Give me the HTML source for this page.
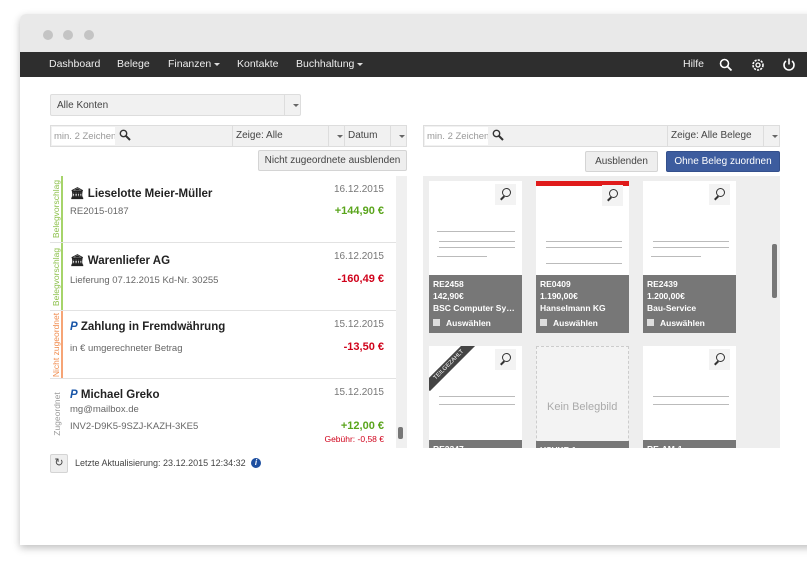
<!DOCTYPE html>
<html><head><meta charset="utf-8"><style>
*{box-sizing:border-box;margin:0;padding:0}
body{width:807px;height:568px;background:#fff;font-family:"Liberation Sans",sans-serif;position:relative;overflow:hidden;color:#333}
.a{position:absolute;white-space:nowrap}
.win{left:20px;top:14px;width:800px;height:531px;background:#fff;border-radius:6px 0 0 0;box-shadow:0 3px 8px rgba(0,0,0,.25)}
.tb{left:20px;top:14px;width:800px;height:38px;background:#e9e9e9;border-radius:6px 0 0 0}
.dot{width:10px;height:10px;border-radius:50%;background:#c4c4c4;top:30px}
.nav{left:20px;top:52px;width:800px;height:25px;background:#2e2e2e;color:#eee;font-size:10.5px}
.nav span{position:absolute;top:6px;white-space:nowrap}
.car{display:inline-block;border-left:3px solid transparent;border-right:3px solid transparent;border-top:3px solid #ddd;vertical-align:middle;margin-left:3px}
.box{background:#f1f1f1;border:1px solid #ddd;font-size:10px;color:#444}
.inp{background:#fff;font-size:9.5px;color:#999;white-space:nowrap;overflow:hidden}
.btn{background:#eee;border:1px solid #d4d4d4;font-size:10px;color:#444;text-align:center;line-height:19px;border-radius:2px}
.row{left:50px;width:346px;border-bottom:1px solid #e2e2e2;background:#fff}
.lab{position:absolute;left:0;top:0;width:13px;height:100%;}
.lab i{position:absolute;left:50%;top:50%;transform:translate(-50%,-50%) rotate(-90deg);font-style:normal;font-size:8.5px;white-space:nowrap}
.ti{position:absolute;left:20px;top:10px;font-size:11.5px;font-weight:bold;color:#222;white-space:nowrap}
.dt{position:absolute;right:12px;top:8px;font-size:10px;color:#777}
.sub{position:absolute;left:20px;font-size:9.5px;color:#666;white-space:nowrap}
.amt{position:absolute;right:12px;font-size:11px;font-weight:bold}
.card{width:93px;height:152px;background:#fff}
.info{position:absolute;left:0;top:94px;width:93px;height:58px;background:#777;color:#fff;font-size:8.5px;font-weight:bold;padding:3px 4px;line-height:12px;overflow:hidden}
.info div{white-space:nowrap;overflow:hidden;text-overflow:ellipsis}
.zm{position:absolute;right:6px;top:3px;width:21px;height:21px;background:#f3f3f3}
.zm:after{content:"";position:absolute;left:7px;top:4px;width:7px;height:7px;border:1.5px solid #333;border-radius:50%}
.zm:before{content:"";position:absolute;left:5px;top:13px;width:5px;height:2px;background:#333;transform:rotate(-45deg)}
.ln{position:absolute;height:1px;background:#bbb}
.cb{display:inline-block;width:7px;height:7px;background:#ddd;margin-right:6px}
</style></head><body>
<div class="a win"></div>
<div class="a tb"></div>
<div class="a dot" style="left:43px"></div><div class="a dot" style="left:63px"></div><div class="a dot" style="left:84px"></div>
<div class="a nav">
<span style="left:29px">Dashboard</span><span style="left:97px">Belege</span><span style="left:148px">Finanzen<i class="car"></i></span><span style="left:217px">Kontakte</span><span style="left:276px">Buchhaltung<i class="car"></i></span>
<span style="left:663px">Hilfe</span>
<svg class="a" style="left:699px;top:6px" width="14" height="14" viewBox="0 0 14 14"><circle cx="5.5" cy="5.5" r="4" stroke="#fff" stroke-width="1.6" fill="none"/><path d="M8.5 8.5L12.5 12.5" stroke="#fff" stroke-width="1.8"/></svg>
<svg class="a" style="left:731px;top:6px" width="14" height="14" viewBox="0 0 14 14"><circle cx="7" cy="7" r="5" stroke="#fff" stroke-width="1.6" fill="none" stroke-dasharray="2.2 1.1"/><circle cx="7" cy="7" r="2" stroke="#fff" stroke-width="1.3" fill="none"/></svg>
<svg class="a" style="left:762px;top:5px" width="14" height="15" viewBox="0 0 14 15"><path d="M4 4A5 5 0 1 0 10 4" stroke="#fff" stroke-width="1.6" fill="none"/><path d="M7 1.5V7.5" stroke="#fff" stroke-width="1.6"/></svg>
</div>

<div class="a box" style="left:50px;top:94px;width:251px;height:22px;border-radius:2px"><span class="a" style="left:6px;top:5px">Alle Konten</span><span class="a" style="left:233px;top:0;height:20px;border-left:1px solid #ddd;width:17px"></span><i class="a car" style="left:239px;top:9px;border-top-color:#666"></i></div>

<div class="a box" style="left:50px;top:125px;width:357px;height:22px"></div>
<div class="a inp" style="left:52px;top:127px;width:63px;height:18px;padding:4px 2px">min. 2 Zeichen</div>
<svg class="a" style="left:119px;top:129px" width="12" height="12"><circle cx="4.5" cy="4.5" r="3.2" stroke="#333" stroke-width="1.4" fill="none"/><path d="M7 7l4 4" stroke="#333" stroke-width="2"/></svg>
<div class="a" style="left:232px;top:126px;height:20px;border-left:1px solid #ddd"></div>
<span class="a" style="left:236px;top:130px;font-size:10px;color:#444">Zeige: Alle</span>
<div class="a" style="left:328px;top:126px;height:20px;border-left:1px solid #ddd"></div><i class="a car" style="left:334px;top:135px;border-top-color:#666"></i>
<div class="a" style="left:344px;top:126px;height:20px;border-left:1px solid #ddd"></div>
<span class="a" style="left:348px;top:130px;font-size:10px;color:#444">Datum</span>
<div class="a" style="left:390px;top:126px;height:20px;border-left:1px solid #ddd"></div><i class="a car" style="left:396px;top:135px;border-top-color:#666"></i>
<div class="a btn" style="left:258px;top:150px;width:149px;height:21px">Nicht zugeordnete ausblenden</div>

<div class="a" style="left:50px;top:176px;width:357px;height:272px;background:#fff;border:1px solid #e6e6e6"></div>
<div class="a" style="left:396px;top:176px;width:11px;height:272px;background:#f0f0f0"></div>
<div class="a" style="left:398px;top:427px;width:5px;height:12px;background:#777;border-radius:2px"></div>

<div class="a row" style="top:176px;height:67px"><div class="lab" style="border-right:2px solid #a6d46a"><i style="color:#8cc04a">Belegvorschlag</i></div>
<span class="ti">🏛 Lieselotte Meier-Müller</span><span class="dt">16.12.2015</span><span class="sub" style="top:30px">RE2015-0187</span><span class="amt" style="top:29px;color:#5aa51c">+144,90 €</span></div>
<div class="a row" style="top:243px;height:68px"><div class="lab" style="border-right:2px solid #a6d46a"><i style="color:#8cc04a">Belegvorschlag</i></div>
<span class="ti">🏛 Warenliefer AG</span><span class="dt">16.12.2015</span><span class="sub" style="top:32px">Lieferung 07.12.2015 Kd-Nr. 30255</span><span class="amt" style="top:30px;color:#d0021b">-160,49 €</span></div>
<div class="a row" style="top:311px;height:68px"><div class="lab" style="border-right:2px solid #f6a476"><i style="color:#f08a4b">Nicht zugeordnet</i></div>
<span class="ti"><b style="color:#1a56a8;font-style:italic">P</b> Zahlung in Fremdwährung</span><span class="dt">15.12.2015</span><span class="sub" style="top:32px">in € umgerechneter Betrag</span><span class="amt" style="top:30px;color:#d0021b">-13,50 €</span></div>
<div class="a row" style="top:379px;height:69px;border-bottom:none"><div class="lab"><i style="color:#999">Zugeordnet</i></div>
<span class="ti"><b style="color:#1a56a8;font-style:italic">P</b> Michael Greko</span><span class="dt">15.12.2015</span><span class="sub" style="top:25px">mg@mailbox.de</span><span class="sub" style="top:42px">INV2-D9K5-9SZJ-KAZH-3KE5</span><span class="amt" style="top:41px;color:#5aa51c">+12,00 €</span><span class="a" style="right:12px;top:55px;font-size:8.5px;color:#d0021b">Gebühr: -0,58 €</span></div>

<div class="a btn" style="left:50px;top:454px;width:18px;height:19px;line-height:17px;font-size:11px">↻</div>
<span class="a" style="left:75px;top:458px;font-size:9px;color:#444">Letzte Aktualisierung: 23.12.2015 12:34:32</span>
<div class="a" style="left:251px;top:458px;width:10px;height:10px;border-radius:50%;background:#1d4fa0;color:#fff;font-size:8px;text-align:center;line-height:10px;font-style:italic;font-weight:bold">i</div>

<div class="a box" style="left:423px;top:125px;width:357px;height:22px"></div>
<div class="a inp" style="left:425px;top:127px;width:63px;height:18px;padding:4px 2px">min. 2 Zeichen</div>
<svg class="a" style="left:492px;top:129px" width="12" height="12"><circle cx="4.5" cy="4.5" r="3.2" stroke="#333" stroke-width="1.4" fill="none"/><path d="M7 7l4 4" stroke="#333" stroke-width="2"/></svg>
<div class="a" style="left:667px;top:126px;height:20px;border-left:1px solid #ddd"></div>
<span class="a" style="left:671px;top:130px;font-size:10px;color:#444">Zeige: Alle Belege</span>
<div class="a" style="left:763px;top:126px;height:20px;border-left:1px solid #ddd"></div><i class="a car" style="left:769px;top:135px;border-top-color:#666"></i>
<div class="a btn" style="left:585px;top:151px;width:73px;height:21px">Ausblenden</div>
<div class="a btn" style="left:666px;top:151px;width:114px;height:21px;background:#3d5c9e;border-color:#34508c;color:#fff">Ohne Beleg zuordnen</div>

<div class="a" style="left:423px;top:176px;width:357px;height:272px;background:#eee;overflow:hidden">
<div class="a" style="left:349px;top:68px;width:5px;height:54px;background:#777;border-radius:2px"></div>
<div class="a card" style="left:6px;top:5px"><div class="zm"></div><div class="ln" style="left:8px;top:50px;width:78px"></div><div class="ln" style="left:10px;top:60px;width:76px"></div><div class="ln" style="left:10px;top:66px;width:76px"></div><div class="ln" style="left:8px;top:75px;width:50px"></div>
<div class="info"><div>RE2458</div><div>142,90€</div><div>BSC Computer Syste...</div><div style="margin-top:3px"><span class="cb"></span>Auswählen</div></div></div>
<div class="a card" style="left:113px;top:5px"><div style="height:5px;background:#e01b1b"></div><div class="zm" style="top:4px"></div><div class="ln" style="left:10px;top:60px;width:76px"></div><div class="ln" style="left:10px;top:66px;width:76px"></div><div class="ln" style="left:10px;top:82px;width:76px"></div>
<div class="info"><div>RE0409</div><div>1.190,00€</div><div>Hanselmann KG</div><div style="margin-top:3px"><span class="cb"></span>Auswählen</div></div></div>
<div class="a card" style="left:220px;top:5px"><div class="zm"></div><div class="ln" style="left:10px;top:60px;width:76px"></div><div class="ln" style="left:10px;top:66px;width:76px"></div><div class="ln" style="left:8px;top:75px;width:50px"></div>
<div class="info"><div>RE2439</div><div>1.200,00€</div><div>Bau-Service</div><div style="margin-top:3px"><span class="cb"></span>Auswählen</div></div></div>
<div class="a card" style="left:6px;top:170px;overflow:hidden"><div class="zm"></div><div class="a" style="left:-12px;top:14px;width:64px;height:10px;background:#444;transform:rotate(-45deg);color:#fff;font-size:6px;text-align:center;line-height:10px">TEILGEZAHLT</div><div class="ln" style="left:10px;top:50px;width:76px"></div><div class="ln" style="left:10px;top:58px;width:76px"></div>
<div class="info">RE2347</div></div>
<div class="a card" style="left:113px;top:170px;background:#f3f3f3;border:1px dashed #ccc"><span class="a" style="left:10px;top:54px;font-size:11px;color:#aaa">Kein Belegbild</span><div class="info" style="left:-1px">USVKF-1</div></div>
<div class="a card" style="left:220px;top:170px"><div class="zm"></div><div class="ln" style="left:10px;top:50px;width:76px"></div><div class="ln" style="left:10px;top:58px;width:76px"></div>
<div class="info">RE-AM-1</div></div>
</div>
</body></html>
